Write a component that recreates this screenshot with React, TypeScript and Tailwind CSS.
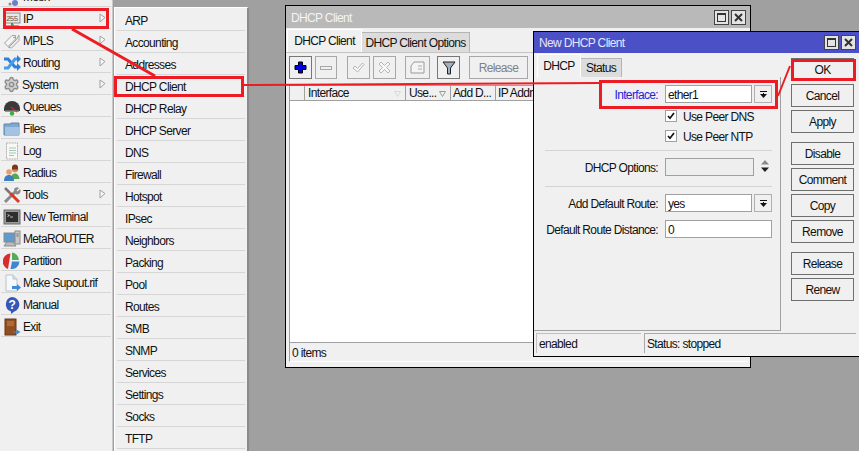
import type { ReactNode } from "react";
import { Settings } from "lucide-react";

const Svg = ({ children }: { children: ReactNode }) => (
  <svg width="18" height="18" viewBox="0 0 18 18" className="shrink-0">
    {children}
  </svg>
);

const icons: Record<string, ReactNode> = {
  Mesh: (
    <Svg>
      <circle cx="12" cy="15" r="3" fill="#6a80c8" />
      <circle cx="7" cy="16" r="1.5" fill="#8a8a8a" />
    </Svg>
  ),
  IP: (
    <Svg>
      <rect x="2" y="3" width="15" height="10" fill="#e8e8e8" stroke="#8c8c8c" />
      <text x="3" y="11" fontSize="7.5" fill="#555" fontFamily="Liberation Mono, monospace">255</text>
      <path d="M9 13v2" stroke="#3b9a3b" strokeWidth="2" />
      <path d="M3 16h13" stroke="#555" />
      <circle cx="9.5" cy="15.5" r="1.5" fill="#36a336" />
    </Svg>
  ),
  MPLS: (
    <Svg>
      <path d="M1.5 11L9 3.5h3.5v3.5L5 14.5z" fill="#f4f4f4" stroke="#a3a3a3" />
      <path d="M5.5 15.5L13 8l3-5v5.5L8.5 16z" fill="#ececec" stroke="#a3a3a3" />
      <circle cx="11" cy="5.5" r="0.8" fill="#888" />
    </Svg>
  ),
  Routing: (
    <Svg>
      <path d="M1 5h4l7 8h3" fill="none" stroke="#2f7fd6" strokeWidth="3" />
      <path d="M1 14h4l7-9h3" fill="none" stroke="#4a9ae6" strokeWidth="3" />
      <path d="M14 1l4 4-4 4zM14 9l4 4-4 4z" fill="#2f7fd6" />
    </Svg>
  ),
  System: <Settings size={17} className="shrink-0 text-[#8c8c8c] fill-[#d0d0d0]" strokeWidth={2} />,
  Queues: (
    <Svg>
      <path d="M1 11a8 8 0 0 1 16 0v2H1z" fill="#3a3a3a" />
      <path d="M8 9l6 5" stroke="#e02020" strokeWidth="1.5" />
      <path d="M2 13h14" stroke="#777" strokeWidth="1.5" />
      <circle cx="9" cy="15.5" r="2.2" fill="#3fae3f" />
    </Svg>
  ),
  Files: (
    <Svg>
      <path d="M1 4h6l1 -1h8v12H1z" fill="#7fa8cf" stroke="#5f87ad" />
      <path d="M2 7h15v8H2z" fill="#a3c3e0" />
    </Svg>
  ),
  Log: (
    <Svg>
      <path d="M3.5 1h11v16h-11z" fill="#f8f8f8" stroke="#b5b5b5" strokeDasharray="2 0.6" />
      <path d="M6 6h7M6 8.5h7M6 11h7M6 13.5h5" stroke="#a5c8b5" />
    </Svg>
  ),
  Radius: (
    <Svg>
      <circle cx="12" cy="5" r="3.2" fill="#d98a5a" />
      <path d="M9 3.5a3 3 0 0 1 6 0v2h-6z" fill="#7a3a1a" />
      <path d="M8 15c0-4 2-5.5 4-5.5s4 1.5 4.5 5.5z" fill="#58a84f" />
      <circle cx="6" cy="8" r="2.8" fill="#e0a070" />
      <path d="M1 17c0-4 2-6 5-6s5 2 5 6z" fill="#3e7fc1" />
    </Svg>
  ),
  Tools: (
    <Svg>
      <path d="M2 16L13 5" stroke="#8a8a8a" strokeWidth="3" />
      <path d="M11 3a3.5 3.5 0 0 1 5-1l-2.5 2.5 1 1L17 3a3.5 3.5 0 0 1-4.5 5z" fill="#8a8a8a" />
      <path d="M2 2l5 5" stroke="#777" strokeWidth="2.5" />
      <path d="M7 7l9 9" stroke="#dc3a22" strokeWidth="3" />
    </Svg>
  ),
  "New Terminal": (
    <Svg>
      <rect x="1" y="2" width="16" height="14" fill="#9a9a9a" stroke="#6a6a6a" />
      <rect x="3" y="4" width="12" height="10" fill="#2e2e2e" />
      <path d="M4.5 6.5l2 1-2 1M7 9h3" stroke="#ddd" fill="none" strokeWidth="0.8" />
    </Svg>
  ),
  MetaROUTER: (
    <Svg>
      <rect x="1" y="3" width="11" height="9" fill="#5f9ad0" stroke="#8a8a8a" />
      <rect x="12" y="1" width="5" height="13" fill="#c8c8c8" stroke="#8a8a8a" />
      <path d="M1 16l3-4h6l3 4z" fill="#bcbcbc" stroke="#8a8a8a" />
      <path d="M13.5 4h2M13.5 6h2" stroke="#666" />
    </Svg>
  ),
  Partition: (
    <Svg>
      <path d="M7.5 1.5L5 17a8 8 0 0 1 2.5-15.5z" fill="#d92c2c" />
      <path d="M9 0.5a8 8 0 0 1 7 7.5H9z" fill="#4fae56" />
      <path d="M7.5 17a8 8 0 0 0 9-7.5H9z" fill="#3e86cf" />
    </Svg>
  ),
  "Make Supout.rif": (
    <Svg>
      <path d="M3 1h7l4 4v12H3z" fill="#f6f9fb" stroke="#b8c3cc" />
      <path d="M10 1v4h4" fill="#d8e2ea" stroke="#b8c3cc" />
      <path d="M9 12h5v-2l4 3.5-4 3.5v-2H9z" fill="#3d8ad6" />
    </Svg>
  ),
  Manual: (
    <Svg>
      <path d="M9 1a7.5 7.5 0 0 1 2 14.7L8 18v-2.5A7.5 7.5 0 0 1 9 1z" fill="#3558b8" />
      <text x="5.5" y="13" fontSize="12" fontWeight="700" fill="#fff" fontFamily="Liberation Sans, sans-serif">?</text>
    </Svg>
  ),
  Exit: (
    <Svg>
      <rect x="2" y="1" width="11" height="16" fill="#8f4f22" stroke="#6a3814" />
      <rect x="4" y="3" width="7" height="5" fill="#b06a32" />
      <path d="M10 13.5h3.5v-2l4 2.5-4 2.5v-2H10z" fill="#3d8ad6" />
    </Svg>
  ),
};

const menu = [
  { label: "Mesh" },
  { label: "IP", more: true },
  { label: "MPLS", more: true },
  { label: "Routing", more: true },
  { label: "System", more: true },
  { label: "Queues" },
  { label: "Files" },
  { label: "Log" },
  { label: "Radius" },
  { label: "Tools", more: true },
  { label: "New Terminal" },
  { label: "MetaROUTER" },
  { label: "Partition" },
  { label: "Make Supout.rif" },
  { label: "Manual" },
  { label: "Exit" },
];

const submenu = [
  "ARP", "Accounting", "Addresses", "DHCP Client", "DHCP Relay", "DHCP Server", "DNS", "Firewall",
  "Hotspot", "IPsec", "Neighbors", "Packing", "Pool", "Routes", "SMB", "SNMP", "Services",
  "Settings", "Socks", "TFTP",
];

const WinButtons = () => (
  <div className="flex gap-[2px]">
    <div className="w-[15px] h-[15px] border border-[#444] bg-[#e4e4e4] flex items-center justify-center">
      <div className="w-[9px] h-[9px] border border-[#333] border-t-2" />
    </div>
    <div className="w-[15px] h-[15px] border border-[#444] bg-[#e4e4e4] flex items-center justify-center">
      <svg width="9" height="9" viewBox="0 0 9 9">
        <path d="M1 1l7 7M8 1l-7 7" stroke="#333" strokeWidth="2" />
      </svg>
    </div>
  </div>
);

const ToolBtn = ({ w, dark, children }: { w: string; dark?: boolean; children: ReactNode }) => (
  <div className={`${w} h-[23px] border flex items-center justify-center bg-[#f0f0f0] ${dark ? "border-[#777]" : "border-[#a8a8a8]"}`}>
    {children}
  </div>
);

const SideBtn = ({ label, className = "" }: { label: string; className?: string }) => (
  <div className={`w-[63px] h-[23px] border border-[#6f6f6f] bg-[#f0f0f0] flex items-center justify-center ${className}`}>
    {label}
  </div>
);

const DropBtn = () => (
  <div className="w-[18px] h-[18px] border border-[#b0b0b0] bg-[#f0f0f0] flex items-center justify-center">
    <svg width="9" height="9" viewBox="0 0 9 9">
      <path d="M1 1h7v1H1zM4 3h1v1h3L4.5 8 1 4h3z" fill="#111" />
    </svg>
  </div>
);

const Check = ({ label, className = "" }: { label: string; className?: string }) => (
  <div className={`flex items-center h-[12px] pl-[131px] ${className}`}>
    <div className="w-[12px] h-[12px] border border-[#a0a0a0] bg-white flex items-center justify-center">
      <svg width="8" height="8" viewBox="0 0 8 8">
        <path d="M1 4l2 2.2L7 1" fill="none" stroke="#111" strokeWidth="1.7" />
      </svg>
    </div>
    <span className="ml-[6px] pt-[1px]">{label}</span>
  </div>
);

const FormRow = ({ label, blue, className = "", children }: { label: string; blue?: boolean; className?: string; children: ReactNode }) => (
  <div className={`flex items-center h-[18px] ${className}`}>
    <div className={`w-[124px] text-right whitespace-nowrap pt-[1px] ${blue ? "text-[#2222dd]" : ""}`}>{label}</div>
    <div className="ml-[7px] flex gap-[2px]">{children}</div>
  </div>
);

const Input = ({ w, children }: { w: string; children?: ReactNode }) => (
  <div className={`${w} h-[18px] border border-[#a0a0a0] bg-white pl-[2px] pt-[1px] flex items-center`}>{children}</div>
);

const SortMark = ({ color }: { color: string }) => (
  <svg width="7" height="6" viewBox="0 0 7 6" className="absolute right-[4px] top-[5px]">
    <path d="M0.5 0.5h6L3.5 5.5z" fill="none" stroke={color} />
  </svg>
);

export default function App() {
  return (
    <div className="relative w-[859px] h-[451px] overflow-hidden flex items-start bg-[#a0a0a0] text-[12px] tracking-[-0.65px] text-[#111] font-['Liberation_Sans',Arial,sans-serif]">
      {/* Left menu */}
      <div className="w-[113px] h-[451px] shrink-0 bg-[#f0f0f0] border-r border-[#c8c8c8] overflow-hidden">
        <div className="-mt-[15px]">
          {menu.map((m) => (
            <div key={m.label} className="relative h-[22px] border-b border-[#d6d6d6] mx-[1px] flex items-center pl-[2px] pt-[2px]">
              {icons[m.label]}
              <span className="ml-[2px] whitespace-nowrap">{m.label}</span>
              {m.more && (
                <svg width="7" height="10" viewBox="0 0 7 10" className="absolute left-[98px] top-[6px]">
                  <path d="M1 1v8l5-4.5z" fill="#f8f8f8" stroke="#a0a0a0" />
                </svg>
              )}
            </div>
          ))}
        </div>
      </div>

      {/* Submenu */}
      <div className="w-[135px] h-[451px] mt-[7px] ml-[1px] shrink-0 bg-[#f0f0f0] border-l border-t border-white border-r-2 border-r-[#8a8a8a] px-[2px] pt-[1px]">
        {submenu.map((s) => (
          <div key={s} className="h-[22px] border-b border-[#d6d6d6] flex items-center pl-[8px] pt-[2px] whitespace-nowrap">
            {s}
          </div>
        ))}
      </div>

      {/* Back window */}
      <div className="absolute left-[285px] top-[5px] w-[466px] h-[363px] border border-black bg-[#f0f0f0] flex flex-col">
        <div className="h-[22px] shrink-0 bg-[#b9b9b9] flex items-center justify-between pl-[5px] pr-[4px] text-[#f4f4f4]">
          <span className="pt-[1px]">DHCP Client</span>
          <WinButtons />
        </div>
        <div className="flex items-end h-[24px] pl-[1px] shrink-0">
          <div className="w-[75px] h-[23px] border-t border-r border-l border-white bg-[#f0f0f0] flex items-center justify-center">DHCP Client</div>
          <div className="w-[108px] h-[20px] bg-[#dcdcdc] border-t border-r border-[#b4b4b4] flex items-center justify-center">DHCP Client Options</div>
        </div>
        <div className="flex items-start h-[33px] pl-[3px] pt-[3px] shrink-0 border-t border-[#c4c4c4]">
          <ToolBtn w="w-[23px]" dark>
            <svg width="13" height="13" viewBox="0 0 13 13">
              <path d="M4.5 1h4v3.5H12v4H8.5V12h-4V8.5H1v-4h3.5z" fill="#0000e6" stroke="#000" />
            </svg>
          </ToolBtn>
          <ToolBtn w="w-[22px] ml-[3px]">
            <div className="w-[12px] h-[4px] border border-[#a8a8a8]" />
          </ToolBtn>
          <ToolBtn w="w-[23px] ml-[10px]">
            <svg width="13" height="11" viewBox="0 0 13 11">
              <path d="M1 6l2-2 2.5 2.5L10.5 1 12 2.5 5.5 10z" fill="#f8f8f8" stroke="#b4b4b4" />
            </svg>
          </ToolBtn>
          <ToolBtn w="w-[23px] ml-[3px]">
            <svg width="13" height="13" viewBox="0 0 13 13">
              <path d="M3 1l3.5 3.5L10 1l2 2-3.5 3.5L12 10l-2 2-3.5-3.5L3 12l-2-2 3.5-3.5L1 3z" fill="#f8f8f8" stroke="#b4b4b4" />
            </svg>
          </ToolBtn>
          <ToolBtn w="w-[25px] ml-[9px]">
            <svg width="15" height="13" viewBox="0 0 15 13">
              <path d="M1 5l3-4h10v11H1z" fill="#f4f4f4" stroke="#9a9a9a" />
              <path d="M8 5h4M8 8h4" stroke="#aaa" />
            </svg>
          </ToolBtn>
          <ToolBtn w="w-[23px] ml-[7px]" dark>
            <svg width="14" height="14" viewBox="0 0 14 14">
              <path d="M1 1h12L8.5 7v6h-3V7z" fill="#9fb0c0" stroke="#222" />
            </svg>
          </ToolBtn>
          <ToolBtn w="w-[59px] ml-[9px]">
            <span className="text-[#808080]">Release</span>
          </ToolBtn>
        </div>
        <div className="mx-[3px] flex-1 flex flex-col border-l border-[#a0a0a0] mb-[5px] border-b border-b-white">
          <div className="flex h-[16px] shrink-0 border-y border-[#a0a0a0] items-center whitespace-nowrap overflow-hidden">
            <div className="w-[15px] h-full shrink-0 border-r border-[#a0a0a0]" />
            <div className="relative w-[101px] shrink-0 border-r border-[#a0a0a0] pl-[3px] h-full flex items-center">
              Interface
              <SortMark color="#d8d8d8" />
            </div>
            <div className="relative w-[45px] shrink-0 border-r border-[#a0a0a0] pl-[3px] h-full flex items-center">
              Use...
              <SortMark color="#9a9a9a" />
            </div>
            <div className="w-[45px] shrink-0 border-r border-[#a0a0a0] pl-[2px] h-full flex items-center">Add D...</div>
            <div className="pl-[2px]">IP Addr</div>
          </div>
          <div className="flex-1 bg-white" />
          <div className="h-[19px] shrink-0 border-t border-[#a0a0a0] flex items-center pl-[2px] pt-[1px]">0 items</div>
        </div>
      </div>

      {/* Front window */}
      <div className="absolute left-[533px] top-[31px] w-[330px] h-[326px] border border-black bg-[#f0f0f0] flex flex-col">
        <div className="h-[21px] shrink-0 bg-[#4b50c6] text-[#e6e6f8] flex items-center justify-between px-[5px]">
          <span className="pt-[1px]">New DHCP Client</span>
          <div className="mr-[1px]">
            <WinButtons />
          </div>
        </div>
        <div className="flex h-[278px] shrink-0">
          <div className="w-[247px] shrink-0 flex flex-col">
            <div className="flex items-end h-[24px] pl-[3px] shrink-0">
              <div className="w-[44px] h-[23px] border-t border-x border-white bg-[#f0f0f0] flex items-center justify-center">DHCP</div>
              <div className="w-[41px] h-[19px] bg-[#dcdcdc] border-t border-r border-[#b4b4b4] flex items-center justify-center">Status</div>
            </div>
            <div className="flex-1 border-r border-b border-[#a0a0a0] pt-[8px]">
              <FormRow label="Interface:" blue>
                <Input w="w-[87px]">ether1</Input>
                <DropBtn />
              </FormRow>
              <Check label="Use Peer DNS" className="mt-[7px]" />
              <Check label="Use Peer NTP" className="mt-[8px]" />
              <div className="h-px bg-[#d4d4d4] mt-[8px] ml-[11px] mr-[8px]" />
              <FormRow label="DHCP Options:" className="mt-[7px]">
                <div className="w-[89px] h-[18px] border border-[#a0a0a0] bg-[#eeeeee]" />
                <svg width="12" height="16" viewBox="0 0 12 16" className="ml-[3px]">
                  <path d="M6 2l4 4.5H2z" fill="#8a8a8a" />
                  <path d="M6 14l4-4.5H2z" fill="#222" />
                </svg>
              </FormRow>
              <div className="h-px bg-[#d4d4d4] mt-[10px] ml-[11px] mr-[8px]" />
              <FormRow label="Add Default Route:" className="mt-[7px]">
                <Input w="w-[87px]">yes</Input>
                <DropBtn />
              </FormRow>
              <FormRow label="Default Route Distance:" className="mt-[8px]">
                <Input w="w-[107px]">0</Input>
              </FormRow>
            </div>
          </div>
          <div className="flex flex-col pl-[10px] pt-[5px]">
            <SideBtn label="OK" />
            <SideBtn label="Cancel" className="mt-[3px]" />
            <SideBtn label="Apply" className="mt-[3px]" />
            <SideBtn label="Disable" className="mt-[9px]" />
            <SideBtn label="Comment" className="mt-[3px]" />
            <SideBtn label="Copy" className="mt-[3px]" />
            <SideBtn label="Remove" className="mt-[3px]" />
            <SideBtn label="Release" className="mt-[9px]" />
            <SideBtn label="Renew" className="mt-[3px]" />
          </div>
        </div>
        <div className="w-[320px] h-[20px] mt-[2px] ml-[2px] flex gap-[3px] shrink-0">
          <div className="w-[105px] border-l border-t border-[#c0c0c0] flex items-center pl-[2px]">enabled</div>
          <div className="flex-1 border-l border-t border-[#a8a8a8] flex items-center pl-[2px]">Status: stopped</div>
        </div>
      </div>

      {/* Red annotations */}
      <div className="absolute left-[3px] top-[8px] w-[106px] h-[21px] border-[3px] border-[#ed1c24]" />
      <div className="absolute left-[114px] top-[76px] w-[130px] h-[21px] border-[3px] border-[#ed1c24]" />
      <div className="absolute left-[599px] top-[80px] w-[179px] h-[29px] border-[3px] border-[#ed1c24]" />
      <div className="absolute left-[791px] top-[59px] w-[65px] h-[22px] border-[3px] border-[#ed1c24]" />
      <svg width="859" height="451" className="absolute left-0 top-0 pointer-events-none">
        <path d="M72 29L155 76" stroke="#ed1c24" strokeWidth="3" fill="none" />
        <path d="M244 85L420 84L600 83" stroke="#ed1c24" strokeWidth="2" fill="none" />
        <path d="M778 96L790 66" stroke="#ed1c24" strokeWidth="2" fill="none" />
      </svg>
    </div>
  );
}
